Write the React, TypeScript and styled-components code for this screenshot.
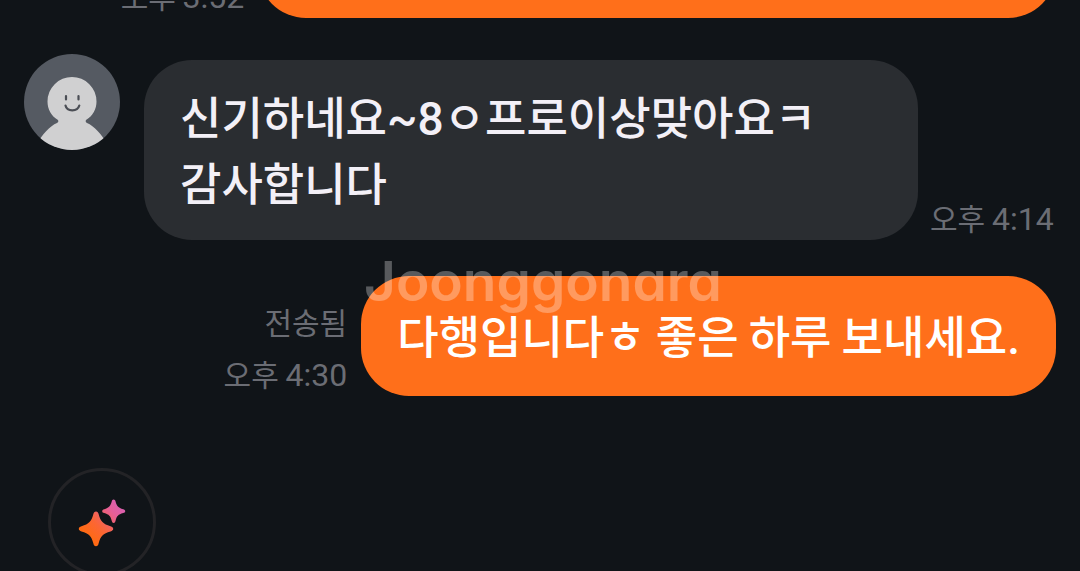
import React from "react";
import styled, { createGlobalStyle } from "styled-components";

const GlobalStyle = createGlobalStyle`
  * { box-sizing: border-box; }
  html, body { margin: 0; height: 100%; background: #101418; overflow: hidden; }
  body { font-family: "Noto Sans CJK KR", sans-serif; }
`;

const Page = styled.main`
  min-height: 100vh;
  overflow: hidden;
  background: #101418;
`;

const Thread = styled.ol`
  display: flex;
  flex-direction: column;
  gap: 36px;
  list-style: none;
  margin: -102px 0 0;
  padding: 0 24px;
`;

const Row = styled.li<{ $mine?: boolean }>`
  display: flex;
  align-items: flex-end;
  justify-content: ${(p) => (p.$mine ? "flex-end" : "flex-start")};
  gap: ${(p) => (p.$mine ? 14 : 12)}px;
  position: relative;
`;

const Avatar = styled.svg`
  align-self: flex-start;
  flex: none;
  width: 96px;
  height: 96px;
  margin-right: 12px;
`;

const Bubble = styled.div<{ $mine?: boolean; $width?: string }>`
  display: flex;
  flex-direction: column;
  justify-content: center;
  width: ${(p) => p.$width ?? "auto"};
  min-height: 120px;
  margin-top: ${(p) => (p.$mine ? 0 : 6)}px;
  padding: 23px 36px 25px;
  border-radius: 48px;
  background: ${(p) => (p.$mine ? "#ff6f1a" : "#2a2d31")};
  color: ${(p) => (p.$mine ? "#ffffff" : "#f3f0f7")};
  font-size: 45px;
  font-weight: 500;
  line-height: 66px;
`;

const Line = styled.p`
  margin: 0;
  white-space: nowrap;
`;

const Latin = styled.span<{ $size: number }>`
  font-family: Roboto, sans-serif;
  font-size: ${(p) => p.$size}px;
  line-height: 1;
`;

const Meta = styled.div`
  display: flex;
  flex-direction: column;
  align-items: flex-end;
  gap: 10px;
  flex: none;
  padding-bottom: 2px;
  color: #6b6d74;
  font-size: 30px;
  line-height: 42px;
  white-space: nowrap;
`;

const Stamp = styled.time`
  display: block;
  height: 42px;
`;

const Watermark = styled.span`
  position: absolute;
  left: 340px;
  top: -30px;
  font-family: Inter, sans-serif;
  font-size: 55px;
  font-weight: 600;
  line-height: 70px;
  font-feature-settings: "cv11";
  color: rgba(255, 255, 255, 0.3);
  pointer-events: none;
`;

const AssistButton = styled.button`
  display: block;
  width: 108px;
  height: 108px;
  margin: 72px 0 0 48px;
  padding: 0;
  border: 3px solid #232326;
  border-radius: 50%;
  background: transparent;
`;

const SparkleIcon = styled.svg`
  display: block;
  width: 102px;
  height: 102px;
`;

function Time({ value }: { value: string }) {
  return (
    <Stamp>
      오후 <Latin $size={32}>{value}</Latin>
    </Stamp>
  );
}

function ProfilePicture() {
  return (
    <Avatar viewBox="0 0 96 96" role="img" aria-label="프로필">
      <defs>
        <clipPath id="face">
          <circle cx="48" cy="48" r="48" />
        </clipPath>
      </defs>
      <g clipPath="url(#face)">
        <rect width="96" height="96" fill="#555a62" />
        <path
          d="M12 92C18 80 26 72 33 69Q35 68 34 66C27 62 23.500 55 23.500 47.500a24.500 24.500 0 0 1 49 0C72.500 55 69 62 62 66Q61 68 63 69C70 72 78 80 84 92V98H12Z"
          fill="#d0d0d1"
        />
      </g>
      <path
        d="M42 42v3.500M54.500 42v3.500M41.500 51.500c1.500 6.500 12 6.500 13.800 0"
        fill="none"
        stroke="#4b4e55"
        strokeWidth="2.200"
        strokeLinecap="round"
      />
    </Avatar>
  );
}

function Sparkles() {
  return (
    <SparkleIcon viewBox="51 471 102 102" aria-hidden="true">
      <defs>
        <linearGradient id="spark" gradientUnits="userSpaceOnUse" x1="88" y1="536" x2="119" y2="507">
          <stop offset="0" stopColor="#ff6a13" />
          <stop offset="0.350" stopColor="#fb6636" />
          <stop offset="0.800" stopColor="#e65f97" />
          <stop offset="1" stopColor="#dc60ac" />
        </linearGradient>
      </defs>
      <g fill="url(#spark)">
        <path d="M96 511.500C97.500 511.500 98.200 512.500 98.600 514C100.500 521.500 103 524 110.500 526.200C112.300 526.700 113.200 527.500 113.200 528.800S112.300 530.900 110.500 531.400C103 533.500 100.500 536 98.600 543.500C98.200 545.200 97.500 546.200 96 546.200S93.800 545.200 93.400 543.500C91.500 536 89 533.500 81.500 531.400C79.800 530.900 78.800 530.100 78.800 528.800S79.800 526.700 81.500 526.200C89 524 91.500 521.500 93.400 514C93.800 512.500 94.500 511.500 96 511.500Z" />
        <path d="M113.600 499.500C114.600 499.500 115.200 500.300 115.500 501.300C116.700 506.200 118.200 507.900 123.200 509.200C124.400 509.500 125.200 510.200 125.200 511.200S124.400 512.800 123.200 513.100C118.200 514.500 116.700 516.100 115.500 521C115.200 522.200 114.600 522.900 113.600 522.900S112.100 522.200 111.800 521C110.500 516.100 109 514.500 104.200 513.100C103 512.800 102.200 512.200 102.200 511.200S103 509.500 104.200 509.200C109 507.900 110.500 506.200 111.800 501.300C112.100 500.300 112.600 499.500 113.600 499.500Z" />
      </g>
    </SparkleIcon>
  );
}

export default function App() {
  return (
    <Page>
      <GlobalStyle />
      <Thread>
        <Row $mine>
          <Meta>
            <Time value="3:52" />
          </Meta>
          <Bubble $mine $width="77.300%" />
        </Row>
        <Row>
          <ProfilePicture />
          <Bubble $width="75%">
            <Line>
              신기하네요<Latin $size={46}>~8</Latin>ㅇ프로이상맞아요ㅋ
            </Line>
            <Line>감사합니다</Line>
          </Bubble>
          <Meta>
            <Time value="4:14" />
          </Meta>
        </Row>
        <Row $mine>
          <Meta>
            <span>전송됨</span>
            <Time value="4:30" />
          </Meta>
          <Bubble $mine>
            <Line>
              다행입니다ㅎ 좋은 하루 보내세요<Latin $size={46}>.</Latin>
            </Line>
          </Bubble>
          <Watermark>Joonggonara</Watermark>
        </Row>
      </Thread>
      <AssistButton type="button" aria-label="AI 추천 답변">
        <Sparkles />
      </AssistButton>
    </Page>
  );
}
